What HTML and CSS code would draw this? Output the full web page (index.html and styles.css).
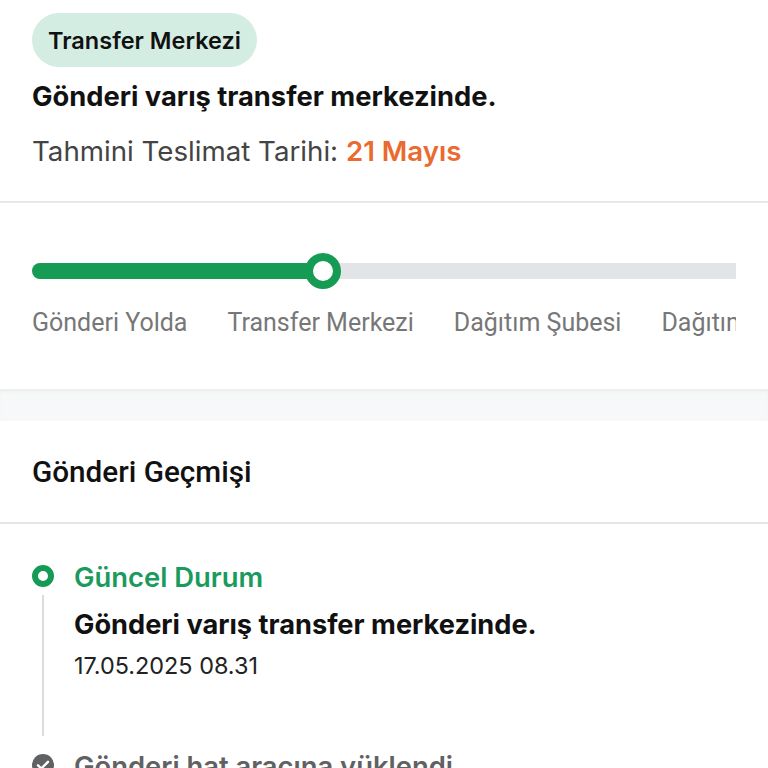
FILE: index.html
```html
<!DOCTYPE html>
<html lang="tr">
<head>
<meta charset="utf-8">
<link rel="stylesheet" href="styles.css">
</head>
<body>
<section class="summary">
  <div class="pill">Transfer Merkezi</div>
  <h1 class="status">Gönderi varış transfer merkezinde.</h1>
  <p class="eta">Tahmini Teslimat Tarihi: <span class="eta-date">21 Mayıs</span></p>
</section>
<section class="progress">
  <div class="track">
    <div class="fill" style="width: 290px"></div>
    <div class="knob"></div>
  </div>
  <div class="labels">
    <span class="lbl">Gönderi Yolda</span>
    <span class="lbl">Transfer Merkezi</span>
    <span class="lbl">Dağıtım Şubesi</span>
    <span class="lbl">Dağıtımda</span>
  </div>
</section>
<div class="band"></div>
<section class="history">
  <h2 class="history-title">Gönderi Geçmişi</h2>
  <ul class="timeline">
    <li class="event current">
      <div class="rail">
        <span class="ring"></span>
        <span class="line"></span>
      </div>
      <div class="event-body">
        <div class="event-title">Güncel Durum</div>
        <div class="event-desc">Gönderi varış transfer merkezinde.</div>
        <div class="event-time">17.05.2025 08.31</div>
      </div>
    </li>
    <li class="event done">
      <div class="rail">
        <svg class="check" viewBox="0 0 22 22" width="22" height="22"><circle cx="11" cy="11" r="11" fill="#5f6163"/><path d="M6 11.3l3.3 3.2L16 7.8" fill="none" stroke="#fff" stroke-width="2.4" stroke-linecap="round" stroke-linejoin="round"/></svg>
      </div>
      <div class="event-body">
        <div class="event-title grey">Gönderi hat aracına yüklendi</div>
      </div>
    </li>
  </ul>
</section>
</body>
</html>
```
FILE: styles.css
```css
html, body {
  margin: 0;
  padding: 0;
  background: #fff;
  font-family: Inter, "Noto Sans", sans-serif;
  color: #111;
  overflow: hidden;
  height: 768px;
}
.summary {
  padding: 13px 32px 0;
  height: 188px;
  border-bottom: 2px solid #e8e8e8;
}
.pill {
  display: inline-flex;
  align-items: center;
  justify-content: center;
  box-sizing: border-box;
  width: 225px;
  height: 54px;
  border-radius: 27px;
  background: #d4ede2;
  font-size: 23.5px;
  font-weight: 600;
  color: #111;
}
.status {
  margin: 15px 0 0;
  font-size: 27.3px;
  font-weight: 700;
  line-height: 30px;
}
.eta {
  margin: 24px 0 0;
  font-size: 27.7px;
  line-height: 30px;
  color: #444;
}
.eta-date {
  color: #ea6a2f;
  font-weight: 600;
}
.progress {
  padding: 0 32px;
  height: 186px;
  overflow: hidden;
}
.track {
  position: relative;
  margin-top: 60px;
  height: 16px;
  border-radius: 8px 0 0 8px;
  background: #e3e4e6;
}
.fill {
  height: 16px;
  border-radius: 8px 0 0 8px;
  background: #169b55;
}
.knob {
  position: absolute;
  left: 273px;
  top: -10px;
  width: 20px;
  height: 20px;
  border: 8px solid #169b55;
  border-radius: 50%;
  background: #fff;
}
.labels {
  display: flex;
  gap: 40px;
  margin-top: 29px;
  line-height: 30px;
  white-space: nowrap;
  overflow: hidden;
  font-family: Roboto, "Noto Sans", sans-serif;
  font-size: 25px;
  color: #777;
}
.band {
  height: 32px;
  background: #f7f8f9;
  box-shadow: inset 0 4px 4px -2px #ebebeb;
}
.history-title {
  margin: 0;
  padding: 0 32px;
  height: 101px;
  display: flex;
  align-items: center;
  font-family: Roboto, "Noto Sans", sans-serif;
  font-size: 29.7px;
  font-weight: 500;
  border-bottom: 2px solid #e6e6e6;
}
.timeline {
  list-style: none;
  margin: 0;
  padding: 38px 32px 0;
}
.event {
  display: flex;
  gap: 20px;
}
.rail {
  width: 22px;
  display: flex;
  flex-direction: column;
  align-items: center;
  padding-top: 3px;
}
.ring {
  width: 10px;
  height: 10px;
  border: 6px solid #169b55;
  border-radius: 50%;
  flex: none;
}
.line {
  width: 2px;
  flex: 1;
  margin-top: 8px;
  margin-bottom: 15px;
  background: #dcdcdc;
}
.event-body {
  padding-bottom: 30px;
}
.event.current .event-body {
  padding-bottom: 70px;
}
.event-title {
  font-size: 27.4px;
  font-weight: 600;
  line-height: 30px;
  color: #1a9a5d;
}
.event-title.grey {
  color: #5f6163;
}
.event-desc {
  margin-top: 18px;
  font-size: 27.2px;
  font-weight: 700;
  line-height: 30px;
}
.event-time {
  margin-top: 11px;
  font-size: 23.4px;
  line-height: 30px;
  color: #222;
}
.check {
  margin-top: 0;
}
```
